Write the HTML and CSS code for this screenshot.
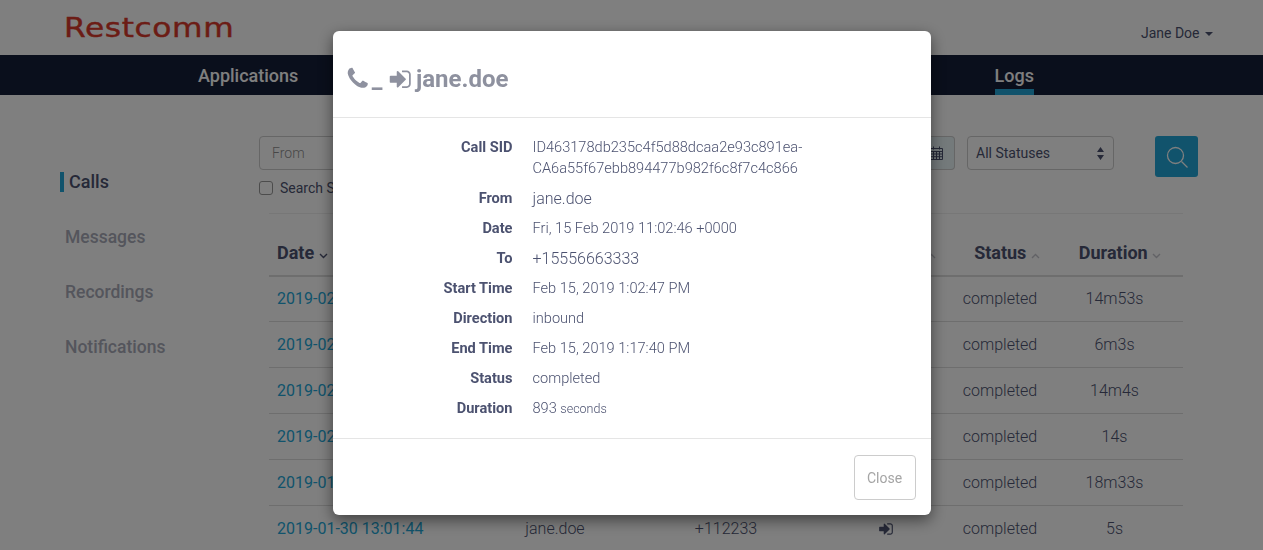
FILE: index.html
```html
<!DOCTYPE html>
<html lang="en">
<head>
    <meta charset="UTF-8">
    <meta name="viewport" content="width=device-width, initial-scale=1.0">
    <title>Restcomm - Logs</title>
    <link rel="stylesheet" href="styles.css">
</head>
<body>
    <svg class="sprites" width="0" height="0" aria-hidden="true">
        <symbol id="i-phone" viewBox="0 0 1792 1792"><path d="M1600 1240q0 27-10 70.5t-21 68.5q-21 50-122 106-94 51-186 51-27 0-53-3.5t-57.5-12.5-47-14.5-55.5-20.5-49-18q-98-35-175-83-127-79-264-216t-216-264q-48-77-83-175-3-9-18-49t-20.5-55.5-14.5-47-12.5-57.5-3.5-53q0-92 51-186 56-101 106-122 25-11 68.5-21t70.5-10q14 0 21 3 18 6 53 76 11 19 30 54t35 63.5 31 53.5q3 4 17.5 25t21.5 35.5 7 28.5q0 20-28.5 50t-62 55-62 53-28.5 46q0 9 5 22.5t8.5 20.5 14 24 11.5 19q76 137 174 235t235 174q2 1 19 11.5t24 14 20.5 8.5 22.5 5q18 0 46-28.5t53-62 55-62 50-28.5q14 0 28.5 7t35.5 21.5 25 17.5q25 15 53.5 31t63.5 35 54 30q70 35 76 53 3 7 3 21z"/></symbol>
        <symbol id="i-signin" viewBox="0 0 1792 1792"><path d="M1312 896q0 26-19 45l-544 544q-19 19-45 19t-45-19-19-45v-288h-448q-26 0-45-19t-19-45v-384q0-26 19-45t45-19h448v-288q0-26 19-45t45-19 45 19l544 544q19 19 19 45zm352-352v704q0 119-84.5 203.5t-203.5 84.5h-320q-13 0-22.5-9.5t-9.5-22.5q0-4-1-20t-.5-26.5 3-23.5 10-19.5 20.5-6.5h320q66 0 113-47t47-113v-704q0-66-47-113t-113-47h-312l-11.5-1-11.5-3-8-5.5-7-9-2-13.5q0-4-1-20t-.5-26.5 3-23.5 10-19.5 20.5-6.5h320q119 0 203.5 84.5t84.5 203.5z"/></symbol>
    </svg>

    <div class="page">
        <header class="topbar">
            <div class="logo">Restcomm</div>
            <div class="user">Jane Doe <span class="caret"></span></div>
        </header>

        <nav class="mainnav">
            <a>Applications</a>
            <a class="active">Logs</a>
        </nav>

        <div class="content">
            <aside class="sidebar">
                <a class="active">Calls</a>
                <a>Messages</a>
                <a>Recordings</a>
                <a>Notifications</a>
            </aside>

            <main class="logs">
                <div class="filters">
                    <div class="field from">From</div>
                    <div class="field to"></div>
                    <div class="field date"></div>
                    <div class="addon">
                        <svg width="13" height="14" viewBox="0 0 13 14"><path d="M.5 2.500h12v11H.5zM.5 5.500h12M3.500 5.500v8M6.500 5.500v8M9.500 5.500v8M.5 8h12M.5 10.700h12M3.500.5v3M9.500.5v3" fill="none" stroke="currentColor"/></svg>
                    </div>
                    <div class="field status">All Statuses
                        <svg width="7" height="13" viewBox="0 0 7 13"><path d="M3.500 0 7 5H0zM0 8h7l-3.500 5z"/></svg>
                    </div>
                    <button type="button" class="search-btn">
                        <svg width="24" height="24" viewBox="0 0 24 24"><circle cx="10.500" cy="10.500" r="8" fill="none" stroke="currentColor" stroke-width="1.300"/><path d="m16.500 16.500 6 6" fill="none" stroke="currentColor" stroke-width="1.300"/></svg>
                    </button>
                </div>
                <label class="check"><span class="box"></span>Search Sub Accounts</label>

                <table class="calls">
                    <thead>
                        <tr>
                            <th class="c-date">Date <svg class="chev" width="9" height="6" viewBox="0 0 9 6"><path d="m1 1 3.500 3.500L8 1"/></svg></th>
                            <th class="c-from"></th>
                            <th class="c-to"></th>
                            <th class="c-dir"><svg class="chev faint" width="9" height="6" viewBox="0 0 9 6"><path d="m1 5 3.500-3.500L8 5"/></svg></th>
                            <th class="c-status">Status <svg class="chev faint" width="9" height="6" viewBox="0 0 9 6"><path d="m1 5 3.500-3.500L8 5"/></svg></th>
                            <th class="c-dur">Duration <svg class="chev faint" width="9" height="6" viewBox="0 0 9 6"><path d="m1 1 3.500 3.500L8 1"/></svg></th>
                        </tr>
                    </thead>
                    <tbody>
                        <tr><td class="c-date"><a>2019-02-15 11:02:46</a></td><td></td><td></td><td></td><td>completed</td><td>14m53s</td></tr>
                        <tr><td class="c-date"><a>2019-02-14 16:20:11</a></td><td></td><td></td><td></td><td>completed</td><td>6m3s</td></tr>
                        <tr><td class="c-date"><a>2019-02-12 09:47:30</a></td><td></td><td></td><td></td><td>completed</td><td>14m4s</td></tr>
                        <tr><td class="c-date"><a>2019-02-01 10:15:08</a></td><td></td><td></td><td></td><td>completed</td><td>14s</td></tr>
                        <tr><td class="c-date"><a>2019-01-30 13:22:52</a></td><td></td><td></td><td></td><td>completed</td><td>18m33s</td></tr>
                        <tr><td class="c-date"><a>2019-01-30 13:01:44</a></td><td>jane.doe</td><td>+112233</td><td><svg class="dir"><use href="#i-signin"/></svg></td><td>completed</td><td>5s</td></tr>
                    </tbody>
                </table>
            </main>
        </div>
    </div>

    <div class="backdrop">
        <div class="modal">
            <div class="modal-header">
                <h3>
                    <svg class="ico-phone"><use href="#i-phone"/></svg>
                    <span class="dash">_</span>
                    <svg class="ico-signin"><use href="#i-signin"/></svg>
                    jane.doe
                </h3>
            </div>
            <dl class="modal-body">
                <dt>Call SID</dt>
                <dd class="sid">ID463178db235c4f5d88dcaa2e93c891ea-<br>CA6a55f67ebb894477b982f6c8f7c4c866</dd>
                <dt>From</dt>
                <dd class="big">jane.doe</dd>
                <dt>Date</dt>
                <dd>Fri, 15 Feb 2019 11:02:46 +0000</dd>
                <dt>To</dt>
                <dd class="big">+15556663333</dd>
                <dt>Start Time</dt>
                <dd>Feb 15, 2019 1:02:47 PM</dd>
                <dt>Direction</dt>
                <dd>inbound</dd>
                <dt>End Time</dt>
                <dd>Feb 15, 2019 1:17:40 PM</dd>
                <dt>Status</dt>
                <dd>completed</dd>
                <dt>Duration</dt>
                <dd>893 <small>seconds</small></dd>
            </dl>
            <div class="modal-footer">
                <button type="button" class="close-btn">Close</button>
            </div>
        </div>
    </div>
</body>
</html>
```

FILE: styles.css
```css
* {
    box-sizing: border-box;
}

html, body {
    height: 550px;
    margin: 0;
    overflow: hidden;
}

body {
    font-family: Roboto, "Liberation Sans", sans-serif;
    font-size: 16px;
    font-weight: 300;
    color: #4c5270;
    background-color: #fff;
}

.sprites {
    position: absolute;
}

/* top */
.topbar {
    display: flex;
    justify-content: space-between;
    height: 55px;
    padding: 0 50px 0 64px;
}

.logo {
    font-family: "DejaVu Sans", sans-serif;
    font-size: 27px;
    font-weight: 400;
    line-height: 55px;
    color: #d8392b;
    letter-spacing: 0.5px;
    transform: scaleX(1.16);
    transform-origin: left;
    -webkit-text-stroke: 0.4px #d8392b;
}

.user {
    font-size: 14px;
    font-weight: 400;
    line-height: 66px;
}

.caret {
    display: inline-block;
    width: 0;
    height: 0;
    margin-left: 2px;
    vertical-align: 2px;
    border-top: 4px solid;
    border-left: 4px solid transparent;
    border-right: 4px solid transparent;
}

.mainnav {
    display: flex;
    justify-content: space-between;
    height: 40px;
    padding: 0 229px 0 198px;
    background-color: #141e38;
}

.mainnav a {
    font-size: 18px;
    font-weight: 500;
    line-height: 41px;
    color: #fff;
}

.mainnav a.active {
    border-bottom: 6px solid #22a7d8;
}

/* sidebar + main */
.content {
    display: flex;
}

.sidebar {
    display: flex;
    flex-direction: column;
    gap: 33px;
    width: 259px;
    padding: 77px 0 0 60px;
    flex-shrink: 0;
}

.sidebar a {
    padding-left: 5px;
    font-size: 17.500px;
    font-weight: 500;
    line-height: 22px;
    color: #a9abb8;
}

.sidebar a.active {
    border-left: 4px solid #22a7d8;
    color: #4c5270;
    font-size: 18px;
    line-height: 20px;
    margin-bottom: 1px;
}

.logs {
    width: 939px;
    padding-top: 41px;
}

.filters {
    display: flex;
    align-items: flex-start;
}

.field {
    display: flex;
    align-items: center;
    height: 34px;
    padding: 0 8px;
    border: 1px solid #ccc;
    border-radius: 4px;
    font-size: 14px;
    color: #8f8f8f;
}

.field.from {
    width: 200px;
    margin-right: 10px;
    padding-left: 12px;
}

.field.to {
    width: 200px;
    margin-right: 10px;
}

.field.date {
    width: 240px;
    border-radius: 4px 0 0 4px;
}

.addon {
    display: flex;
    align-items: center;
    justify-content: center;
    width: 37px;
    height: 34px;
    margin-left: -1px;
    border: 1px solid #ccc;
    border-left: 0;
    border-radius: 0 4px 4px 0;
    background-color: #e8f4f7;
}

.field.status {
    justify-content: space-between;
    width: 147px;
    margin-left: 12px;
    color: #4c5270;
    font-weight: 400;
}

.field.status svg {
    fill: #4c5270;
    margin-right: 1px;
}

.search-btn {
    display: flex;
    align-items: center;
    justify-content: center;
    width: 43px;
    height: 41px;
    margin-left: 41px;
    padding: 0;
    border: 0;
    border-radius: 3px;
    background-color: #22a7d8;
    color: #fff;
}

.check {
    display: flex;
    align-items: center;
    margin-top: 1px;
    font-size: 14px;
    font-weight: 400;
    line-height: 20px;
}

.box {
    width: 14px;
    height: 14px;
    margin-right: 7px;
    border: 1px solid #999;
    border-radius: 3px;
    background-color: #fff;
}

.calls {
    width: 914px;
    margin: 15px 0 0 10px;
    border-collapse: collapse;
    border-top: 1px solid #eee;
    table-layout: fixed;
}

.calls th {
    height: 62px;
    padding: 16px 0 0 14px;
    border-bottom: 2px solid #ddd;
    font-size: 18px;
    font-weight: 700;
    text-align: center;
}

.calls td {
    height: 46px;
    padding: 0;
    border-bottom: 1px solid #ddd;
    text-align: center;
}

.calls td:last-child {
    padding-left: 3px;
}

.calls .c-date {
    width: 212px;
    padding-left: 8px;
    text-align: left;
}

.calls .c-dir {
    padding-right: 21px;
    text-align: right;
}

.c-from { width: 148px; }
.c-to { width: 194px; }
.c-dir { width: 134px; }
.c-status { width: 86px; }
.c-dur { width: 140px; }

.calls a {
    color: #22a7d8;
    font-weight: 400;
}

.chev {
    fill: none;
    stroke: #4c5270;
    stroke-width: 1.400;
}

.chev.faint {
    stroke: #c4c5cc;
}

.dir {
    width: 16px;
    height: 16px;
    margin-right: 8px;
    fill: #4c5270;
    vertical-align: -3px;
}

/* modal */
.backdrop {
    position: fixed;
    inset: 0;
    display: flex;
    justify-content: center;
    align-items: flex-start;
    padding-top: 31px;
    background-color: rgba(0, 0, 0, 0.5);
}

.modal {
    width: 598px;
    height: 484px;
    border-radius: 6px;
    background-color: #fff;
    box-shadow: 0 5px 15px rgba(0, 0, 0, 0.5);
}

.modal-header {
    height: 87px;
    padding: 31px 15px 0;
    border-bottom: 1px solid #e5e5e5;
}

.modal-header h3 {
    display: flex;
    align-items: center;
    margin: 0;
    font-size: 24px;
    font-weight: 700;
    line-height: 34px;
    color: #8e919f;
}

.ico-phone {
    width: 25.500px;
    height: 25.500px;
    margin-left: -2.700px;
    fill: #8e919f;
}

.dash {
    margin-left: 1.500px;
    margin-right: 5px;
}

.ico-signin {
    width: 24.500px;
    height: 24.500px;
    margin-right: 4px;
    fill: #8e919f;
}

.modal-body {
    display: grid;
    grid-template-columns: 165px 1fr;
    column-gap: 20px;
    align-content: start;
    margin: 0;
    height: 321px;
    padding: 19px 15px 0;
    border-bottom: 1px solid #e5e5e5;
}

.modal-body dt {
    font-size: 14.600px;
    font-weight: 700;
    line-height: 21px;
    text-align: right;
    color: #4c5270;
}

.modal-body dd {
    min-height: 30px;
    margin: 0;
    font-size: 14.600px;
    line-height: 21px;
    color: #4c5270;
}

.modal-body dd.sid {
    height: 51px;
}

.modal-body dd.big {
    font-size: 16px;
}

.modal-body small {
    font-size: 12.500px;
}

.modal-footer {
    display: flex;
    justify-content: flex-end;
    padding: 16px 15px 0;
}

.close-btn {
    width: 62px;
    height: 45px;
    padding: 0;
    border: 1px solid #ccc;
    border-radius: 4px;
    background-color: #fff;
    font-family: inherit;
    font-size: 14px;
    font-weight: 400;
    color: #a5a5a5;
}
```
